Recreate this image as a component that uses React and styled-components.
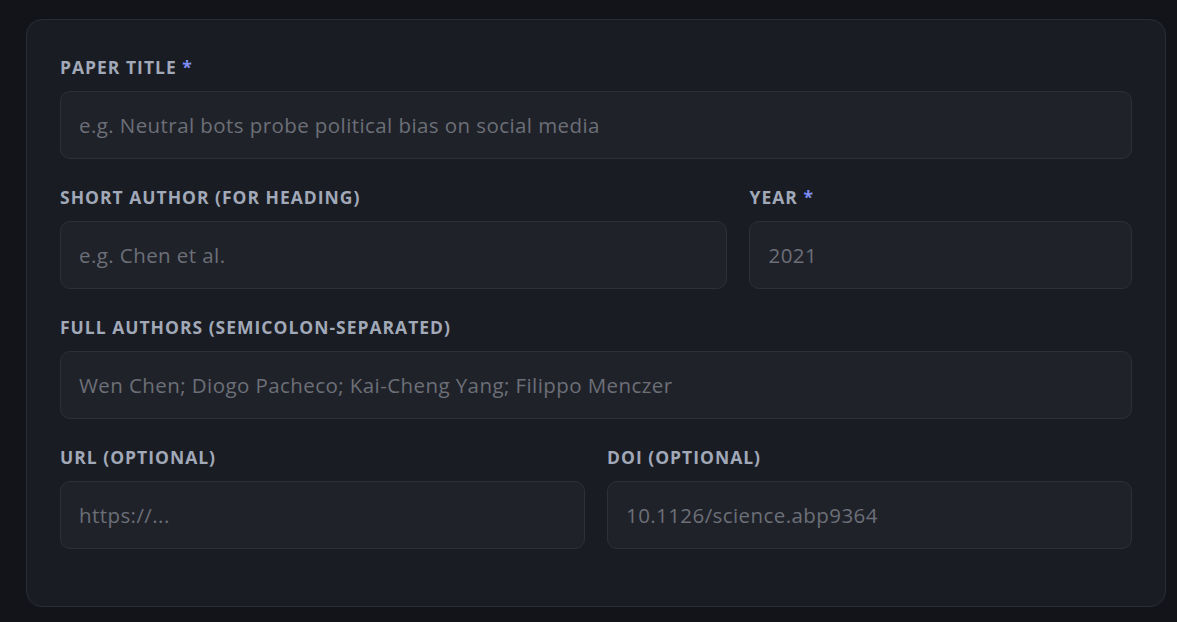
import React from "react";
import styled, { createGlobalStyle } from "styled-components";

const Global = createGlobalStyle`
  html, body { margin: 0; padding: 0; background: #131419; }
  body { font-family: "Open Sans", "Noto Sans", sans-serif; }
  * { box-sizing: border-box; }
`;

const Page = styled.div`
  padding: 19px 11px 16px 26px;
  min-height: 622px;
`;

const Card = styled.form`
  background: #1a1c23;
  border: 1px solid #2b2d35;
  border-radius: 16px;
  padding: 36px 33px 57px 33px;
  display: flex;
  flex-direction: column;
  gap: 27px;
`;

const Row = styled.div`
  display: grid;
  grid-template-columns: ${(p) => p.$cols || "1fr"};
  column-gap: 22px;
`;

const Field = styled.label`
  display: flex;
  flex-direction: column;
  gap: 13px;
`;

const LabelText = styled.span`
  font-size: 17.5px;
  font-weight: 700;
  letter-spacing: 1px;
  text-transform: uppercase;
  color: #a1a9b8;
  line-height: 22px;
  height: 22px;
  white-space: nowrap;
`;

const Star = styled.span`
  color: #7f8ff5;
`;

const Input = styled.input`
  height: 68px;
  width: 100%;
  background: #20222a;
  border: 1px solid #2e3038;
  border-radius: 10px;
  padding: 0 18px;
  font-family: "Open Sans", "Noto Sans", sans-serif;
  font-size: 20.5px;
  letter-spacing: 0.42px;
  color: #d0d3da;
  outline: none;
  &::placeholder { color: #6c6f77; }
`;

const F = ({ label, required, placeholder }) => (
  <Field>
    <LabelText>
      {label}
      {required && <Star> *</Star>}
    </LabelText>
    <Input placeholder={placeholder} />
  </Field>
);

export default function App() {
  return (
    <Page>
      <Global />
      <Card onSubmit={(e) => e.preventDefault()}>
        <Row>
          <F label="Paper title" required placeholder="e.g. Neutral bots probe political bias on social media" />
        </Row>
        <Row $cols="1.745fr 1fr">
          <F label="Short author (for heading)" placeholder="e.g. Chen et al." />
          <F label="Year" required placeholder="2021" />
        </Row>
        <Row>
          <F label="Full authors (semicolon-separated)" placeholder="Wen Chen; Diogo Pacheco; Kai-Cheng Yang; Filippo Menczer" />
        </Row>
        <Row $cols="1fr 1fr">
          <F label="URL (optional)" placeholder="https://..." />
          <F label="DOI (optional)" placeholder="10.1126/science.abp9364" />
        </Row>
      </Card>
    </Page>
  );
}
